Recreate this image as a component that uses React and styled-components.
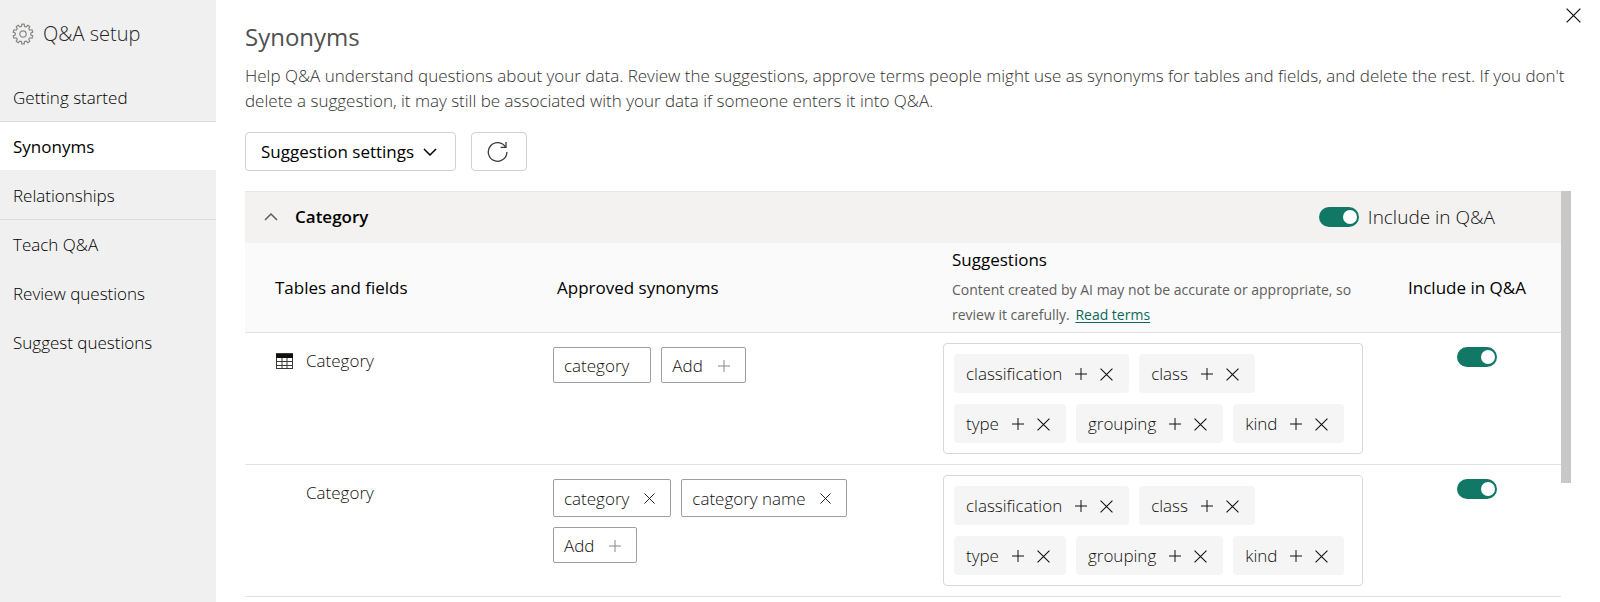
import React, { useState } from "react";
import styled, { createGlobalStyle } from "styled-components";

const GlobalStyle = createGlobalStyle`
    * {
        box-sizing: border-box;
    }
    body {
        margin: 0;
        background-color: #ffffff;
        color: #11100f;
        font-family: "Open Sans", "Noto Sans", sans-serif;
        font-size: 17px;
        font-weight: 300;
        line-height: 24px;
    }
    button {
        margin: 0;
        padding: 0;
        border: none;
        background: none;
        color: inherit;
        font: inherit;
        cursor: pointer;
    }
    svg {
        display: block;
    }
`;

const Page = styled.div`
    display: flex;
    height: 100vh;
    overflow: hidden;
`;

const Sidebar = styled.aside`
    flex: none;
    width: 216px;
    background-color: #f0f0f0;
`;

const SidebarTitle = styled.div`
    display: flex;
    align-items: center;
    gap: 9px;
    height: 72px;
    padding: 0 12px 4px;
    font-size: 20px;
    color: #252423;
`;

const GearIcon = styled.svg`
    width: 22px;
    height: 22px;
    color: #8a8886;
`;

const NavLink = styled.a`
    display: flex;
    align-items: center;
    height: 49px;
    padding: 2px 13px 0;
    border-top: 1px solid ${(props) => (props.$line ? "#dcdcdc" : "transparent")};
    background-color: ${(props) => (props.$active ? "#ffffff" : "transparent")};
    background-clip: padding-box;
    color: #000000;
    font-weight: ${(props) => (props.$active ? 400 : 300)};
    text-decoration: none;
`;

const Main = styled.main`
    flex: 1;
    min-width: 0;
    display: flex;
    flex-direction: column;
    padding: 20px 29px 0;
`;

const TitleBar = styled.div`
    display: flex;
    justify-content: space-between;
    align-items: flex-start;
    height: 43px;
`;

const Title = styled.h1`
    margin: 0;
    font-size: 24px;
    font-weight: 400;
    line-height: 34px;
    color: #505050;
`;

const CloseButton = styled.button`
    margin: -12px -10px 0 0;
`;

const Description = styled.p`
    margin: 0 0 19px;
    line-height: 25px;
    color: #323130;
`;

const Toolbar = styled.div`
    display: flex;
    gap: 15px;
    margin-bottom: 20px;
`;

const ToolButton = styled.button`
    display: flex;
    align-items: center;
    justify-content: center;
    gap: 9px;
    height: 39px;
    padding: 1px 18px 0 15px;
    border: 1px solid #d1d1d1;
    border-radius: 4px;
    color: #000000;
    font-weight: 400;
`;

const ListArea = styled.div`
    flex: 1;
    min-height: 0;
    display: flex;
`;

const List = styled.section`
    flex: 1;
    min-width: 0;
    overflow: hidden;
`;

const ScrollTrack = styled.div`
    flex: none;
    width: 10px;
`;

const ScrollThumb = styled.div`
    height: 71%;
    background-color: #c8c8c8;
`;

const GroupHeader = styled.div`
    display: flex;
    align-items: center;
    justify-content: space-between;
    height: 52px;
    padding: 0 66px 2px 19px;
    border-top: 1px solid #e8e8e8;
    background-color: #f3f2f1;
`;

const GroupToggle = styled.button`
    display: flex;
    align-items: center;
    gap: 17px;
    color: #000000;
    font-weight: 600;
`;

const SwitchLabel = styled.label`
    display: flex;
    align-items: center;
    gap: 9px;
    font-size: 19px;
`;

const Switch = styled.input`
    appearance: none;
    display: inline-flex;
    align-items: center;
    justify-content: ${(props) => (props.checked ? "flex-end" : "flex-start")};
    width: 40px;
    height: 20px;
    margin: 0;
    padding: 0 2px;
    border-radius: 10px;
    background-color: ${(props) => (props.checked ? "#117865" : "#8a8886")};
    cursor: pointer;
    &::before {
        content: "";
        width: 14px;
        height: 14px;
        border-radius: 50%;
        background-color: #ffffff;
    }
`;

const Table = styled.table`
    width: 100%;
    border-collapse: separate;
    border-spacing: 0;
    table-layout: fixed;
`;

const Col = styled.col`
    width: ${(props) => props.$width};
`;

const HeadCell = styled.th`
    padding: 6px 10px 5px ${(props) => props.$indent}px;
    border-bottom: 1px solid #e1e1e1;
    background-color: #fafafa;
    color: #000000;
    font-weight: 400;
    line-height: 22px;
    text-align: ${(props) => (props.$center ? "center" : "left")};
`;

const Note = styled.div`
    margin-top: 6px;
    font-size: 14px;
    line-height: 25px;
    color: #605e5c;
    a {
        margin-left: 2px;
        color: #0c695a;
        text-underline-offset: 2px;
    }
`;

const Cell = styled.td`
    padding: ${(props) => props.$top}px 10px 10px ${(props) => props.$indent}px;
    border-bottom: 1px solid #e1e1e1;
    vertical-align: top;
    text-align: ${(props) => (props.$center ? "center" : "left")};
`;

const FieldName = styled.div`
    display: grid;
    grid-template-columns: 18px auto;
    justify-content: start;
    align-items: center;
    gap: 12px;
`;

const FieldText = styled.span`
    grid-column: 2;
`;

const SynonymList = styled.div`
    display: flex;
    flex-wrap: wrap;
    align-items: flex-start;
    gap: 10px;
`;

const Synonym = styled.div`
    display: flex;
    align-items: center;
    gap: 15px;
    height: ${(props) => (props.$fixed ? 36 : 38)}px;
    padding: 1px ${(props) => (props.$fixed ? 21 : 15)}px 0 10px;
    border: 1px solid #a19f9d;
    border-radius: 2px;
`;

const AddButton = styled.button`
    display: flex;
    align-items: center;
    gap: 15px;
    height: 36px;
    padding: 1px 15px 0 10px;
    border: 1px solid #a19f9d;
    border-radius: 2px;
    svg {
        color: #8a8886;
    }
`;

const SuggestionBox = styled.div`
    display: flex;
    flex-wrap: wrap;
    gap: 11px 10px;
    padding: 10px;
    border: 1px solid #d8d8d8;
    border-radius: 4px;
`;

const Suggestion = styled.div`
    display: flex;
    align-items: center;
    gap: 13px;
    height: 39px;
    padding: 1px 16px 0 12px;
    border-radius: 4px;
    background-color: #f5f5f5;
`;

const navItems = [
    { label: "Getting started" },
    { label: "Synonyms", active: true, line: true },
    { label: "Relationships" },
    { label: "Teach Q&A", line: true },
    { label: "Review questions" },
    { label: "Suggest questions" },
];

const suggestions = ["classification", "class", "type", "grouping", "kind"];

const rows = [
    { id: "table", name: "Category", isTable: true, synonyms: [{ text: "category", fixed: true }] },
    { id: "field", name: "Category", synonyms: [{ text: "category" }, { text: "category name" }] },
];

const TEETH = 10;

const gearPoints = () => {
    const points = [];
    for (let i = 0; i < TEETH; i++) {
        [[-11, 7.8], [-7, 10], [7, 10], [11, 7.8]].forEach(([offset, r]) => {
            const angle = ((i * 360 / TEETH + 18 + offset) * Math.PI) / 180;
            points.push(`${(11 + r * Math.cos(angle)).toFixed(2)},${(11 + r * Math.sin(angle)).toFixed(2)}`);
        });
    }
    return points.join(" ");
};

const Gear = () => (
    <GearIcon viewBox="0 0 22 22" fill="none" stroke="currentColor" strokeWidth="1.2" strokeLinejoin="round">
        <polygon points={gearPoints()} />
        <circle cx="11" cy="11" r="3.2" />
    </GearIcon>
);

const CrossIcon = ({ size }) => (
    <svg width={size} height={size} viewBox="0 0 12 12" fill="none" stroke="currentColor" strokeWidth="1">
        <path d="M0.5 0.5L11.5 11.5M11.5 0.5L0.5 11.5" />
    </svg>
);

const PlusIcon = ({ size }) => (
    <svg width={size} height={size} viewBox="0 0 12 12" fill="none" stroke="currentColor" strokeWidth="1">
        <path d="M6 0V12M0 6H12" />
    </svg>
);

const ChevronIcon = ({ up }) => (
    <svg width="14" height="8" viewBox="0 0 14 8" fill="none" stroke={up ? "#605e5c" : "#000000"} strokeWidth="1.5">
        <path d={up ? "M1 7L7 1L13 7" : "M1 1L7 7L13 1"} />
    </svg>
);

const RefreshIcon = () => (
    <svg width="21" height="22" viewBox="0 0 21 22" fill="none" stroke="#3b3a39" strokeWidth="1.3">
        <path d="M19.9 11A9.3 9.3 0 1 1 18.6 6.2" />
        <path d="M19 1V6.4H13.6" />
    </svg>
);

const TableIcon = () => (
    <svg width="17" height="16" viewBox="0 0 17 16" fill="none" stroke="#3b3a39" strokeWidth="1">
        <rect x="0.5" y="0.5" width="16" height="15" />
        <path d="M0 8.5H17M0 12.5H17M6 4V15M11 4V15" />
        <rect x="0" y="1" width="17" height="4" fill="#11100f" stroke="none" />
    </svg>
);

const App = () => {
    const [included, setIncluded] = useState({ group: true, table: true, field: true });

    const toggle = (key) => {
        setIncluded({ ...included, [key]: !included[key] });
    };

    return (
        <>
            <GlobalStyle />
            <Page>
                <Sidebar>
                    <SidebarTitle>
                        <Gear />
                        <span>Q&A setup</span>
                    </SidebarTitle>
                    <nav>
                        {navItems.map((item) => (
                            <NavLink key={item.label} href="#" $active={item.active} $line={item.line}>
                                {item.label}
                            </NavLink>
                        ))}
                    </nav>
                </Sidebar>
                <Main>
                    <TitleBar>
                        <Title>Synonyms</Title>
                        <CloseButton aria-label="Close">
                            <CrossIcon size={15} />
                        </CloseButton>
                    </TitleBar>
                    <Description>
                        Help Q&A understand questions about your data. Review the suggestions, approve terms people
                        might use as synonyms for tables and fields, and delete the rest. If you don't delete a
                        suggestion, it may still be associated with your data if someone enters it into Q&A.
                    </Description>
                    <Toolbar>
                        <ToolButton>
                            Suggestion settings
                            <ChevronIcon />
                        </ToolButton>
                        <ToolButton aria-label="Refresh">
                            <RefreshIcon />
                        </ToolButton>
                    </Toolbar>
                    <ListArea>
                        <List>
                            <GroupHeader>
                                <GroupToggle aria-expanded="true">
                                    <ChevronIcon up />
                                    Category
                                </GroupToggle>
                                <SwitchLabel>
                                    <Switch
                                        type="checkbox"
                                        role="switch"
                                        checked={included.group}
                                        onChange={() => toggle("group")}
                                    />
                                    Include in Q&A
                                </SwitchLabel>
                            </GroupHeader>
                            <Table>
                                <colgroup>
                                    <Col $width="298px" />
                                    <Col />
                                    <Col $width="440px" />
                                    <Col $width="188px" />
                                </colgroup>
                                <thead>
                                    <tr>
                                        <HeadCell $indent={30}>Tables and fields</HeadCell>
                                        <HeadCell $indent={14}>Approved synonyms</HeadCell>
                                        <HeadCell $indent={19}>
                                            Suggestions
                                            <Note>
                                                Content created by AI may not be accurate or appropriate, so review it
                                                carefully. <a href="#">Read terms</a>
                                            </Note>
                                        </HeadCell>
                                        <HeadCell $indent={10} $center>Include in Q&A</HeadCell>
                                    </tr>
                                </thead>
                                <tbody>
                                    {rows.map((row) => (
                                        <tr key={row.id}>
                                            <Cell $top={16} $indent={31}>
                                                <FieldName>
                                                    {row.isTable && <TableIcon />}
                                                    <FieldText>{row.name}</FieldText>
                                                </FieldName>
                                            </Cell>
                                            <Cell $top={14} $indent={10}>
                                                <SynonymList>
                                                    {row.synonyms.map((synonym) => (
                                                        <Synonym key={synonym.text} $fixed={synonym.fixed}>
                                                            {synonym.text}
                                                            {!synonym.fixed && (
                                                                <button aria-label={`Remove ${synonym.text}`}>
                                                                    <CrossIcon size={11} />
                                                                </button>
                                                            )}
                                                        </Synonym>
                                                    ))}
                                                    <AddButton>
                                                        Add
                                                        <PlusIcon size={12} />
                                                    </AddButton>
                                                </SynonymList>
                                            </Cell>
                                            <Cell $top={10} $indent={10}>
                                                <SuggestionBox>
                                                    {suggestions.map((word) => (
                                                        <Suggestion key={word}>
                                                            {word}
                                                            <button aria-label={`Approve ${word}`}>
                                                                <PlusIcon size={12} />
                                                            </button>
                                                            <button aria-label={`Delete ${word}`}>
                                                                <CrossIcon size={13} />
                                                            </button>
                                                        </Suggestion>
                                                    ))}
                                                </SuggestionBox>
                                            </Cell>
                                            <Cell $top={13} $indent={30} $center>
                                                <Switch
                                                    type="checkbox"
                                                    role="switch"
                                                    aria-label={`Include ${row.name} in Q&A`}
                                                    checked={included[row.id]}
                                                    onChange={() => toggle(row.id)}
                                                />
                                            </Cell>
                                        </tr>
                                    ))}
                                </tbody>
                            </Table>
                        </List>
                        <ScrollTrack>
                            <ScrollThumb />
                        </ScrollTrack>
                    </ListArea>
                </Main>
            </Page>
        </>
    );
};

export default App;
